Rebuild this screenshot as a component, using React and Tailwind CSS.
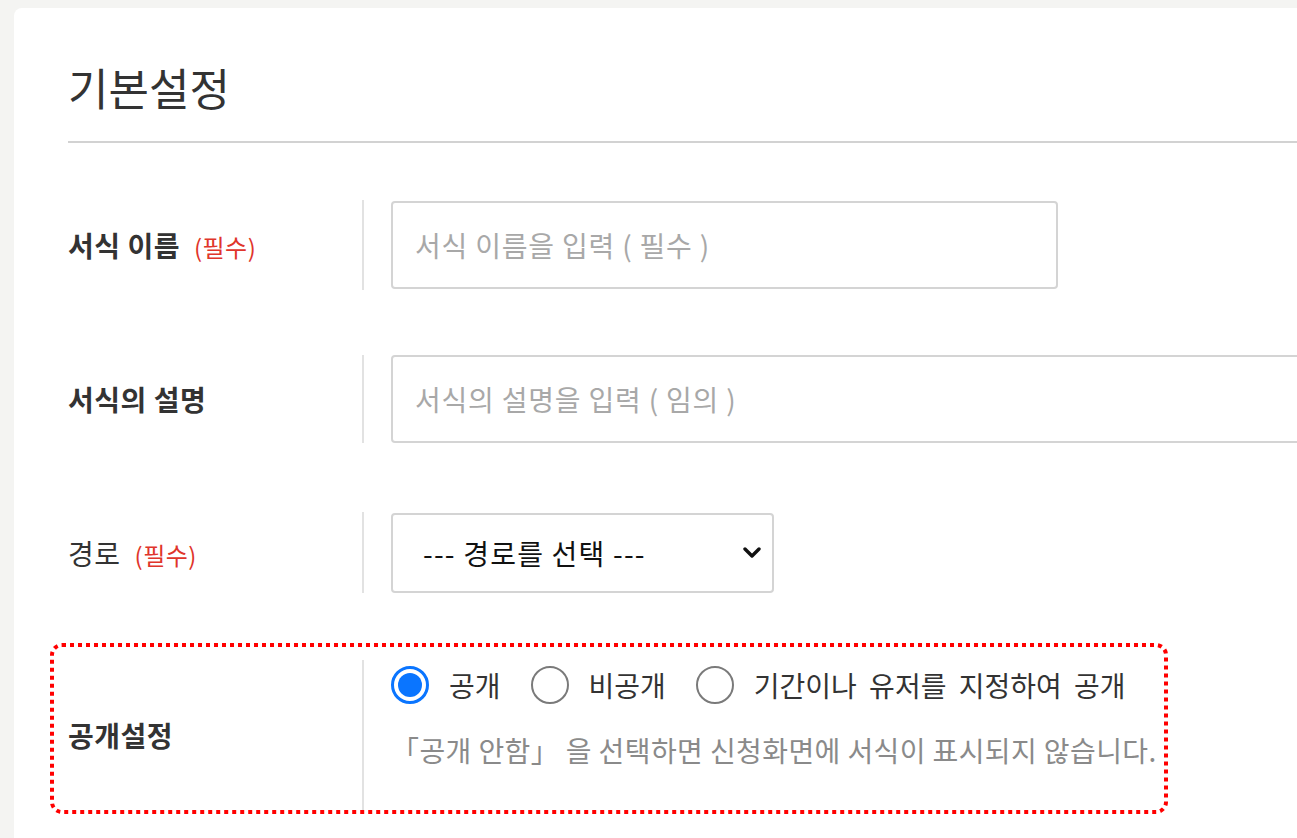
import React from "react";

const FONT = { fontFamily: '"Noto Sans CJK KR", "Noto Sans", sans-serif' };

function Req() {
  return <span className="ml-[14px] text-[24px] text-[#e0352b] font-normal">(필수)</span>;
}

function Radio({ checked, label }) {
  return (
    <label className="flex items-center gap-[20px]">
      {checked ? (
        <span className="flex h-[38px] w-[38px] items-center justify-center rounded-full border-[3px] border-[#0a75ff] bg-white">
          <span className="h-[24px] w-[24px] rounded-full bg-[#0a75ff]" />
        </span>
      ) : (
        <span className="h-[38px] w-[38px] rounded-full border-2 border-[#7a7a7a] bg-white" />
      )}
      <span className="text-[28px] leading-[38px] text-[#333] [word-spacing:6px]">{label}</span>
    </label>
  );
}

function Row({ label, bold = true, req = false, height, mt, children, contentClass = "items-center" }) {
  return (
    <div className={`relative flex ${mt} ${height}`}>
      <div className="flex w-[294px] items-center">
        <span className={`text-[28px] tracking-[0.5px] text-[#333] ${bold ? "font-bold" : "font-normal"}`}>
          {label}
          {req && <Req />}
        </span>
      </div>
      <div className="w-[2px] self-stretch bg-[#e2e2e2]" />
      <div className={`flex pl-[27px] ${contentClass}`}>{children}</div>
    </div>
  );
}

export default function App() {
  return (
    <div className="h-[838px] w-[1297px] overflow-hidden bg-[#f4f4f2] pt-[8px]" style={FONT}>
      <div className="ml-[14px] h-[900px] w-[1400px] rounded-tl-[8px] bg-white pl-[54px]">
        <div className="h-[135px] border-b-2 border-[#d2d2d2] pt-[57px]">
          <h1 className="text-[44px] leading-[44px] font-normal text-[#333]">기본설정</h1>
        </div>

        <Row label="서식 이름" req height="h-[90px]" mt="mt-[57px]">
          <input
            className="h-[88px] w-[667px] rounded-[4px] border-2 border-[#d4d4d4] bg-white px-[22px] text-[28px] tracking-[0.8px] text-[#333] outline-none placeholder:text-[#a8a8a8]"
            placeholder="서식 이름을 입력 ( 필수 )"
          />
        </Row>

        <Row label="서식의 설명" height="h-[88px]" mt="mt-[65px]">
          <input
            className="h-[88px] w-[960px] rounded-[4px] border-2 border-[#d4d4d4] bg-white px-[22px] text-[28px] tracking-[0.8px] text-[#333] outline-none placeholder:text-[#a8a8a8]"
            placeholder="서식의 설명을 입력 ( 임의 )"
          />
        </Row>

        <Row label="경로" bold={false} req height="h-[81px]" mt="mt-[69px]">
          <div className="relative">
            <select className="h-[80px] w-[383px] appearance-none rounded-[4px] border-2 border-[#d4d4d4] bg-white pl-[30px] text-[28px] tracking-[1.2px] text-[#111] outline-none">
              <option>--- 경로를 선택 ---</option>
            </select>
            <svg
              className="pointer-events-none absolute right-[13px] top-[34px]"
              width="18"
              height="12"
              viewBox="0 0 18 12"
            >
              <path d="M2 2 L9 9 L16 2" fill="none" stroke="#111" strokeWidth="3.4" strokeLinecap="round" strokeLinejoin="round" />
            </svg>
          </div>
        </Row>

        <Row label="공개설정" height="h-[150px]" mt="mt-[67px]" contentClass="flex-col items-start pt-[6px]">
          <div className="flex items-center gap-[30px]">
            <Radio checked label="공개" />
            <Radio label="비공개" />
            <Radio label="기간이나 유저를 지정하여 공개" />
          </div>
          <p className="mt-[28px] text-[28px] leading-[36px] tracking-[0.4px] text-[#8a8a8a]">
            「공개 안함」 을 선택하면 신청화면에 서식이 표시되지 않습니다.
          </p>
          <svg
            className="pointer-events-none absolute left-[-18px] top-[-17px]"
            width="1118"
            height="171"
            viewBox="0 0 1118 171"
          >
            <rect
              x="2"
              y="2"
              width="1114"
              height="167"
              rx="10"
              ry="10"
              fill="none"
              stroke="#ff0000"
              strokeWidth="4"
              strokeDasharray="4 4"
            />
          </svg>
        </Row>
      </div>
    </div>
  );
}
